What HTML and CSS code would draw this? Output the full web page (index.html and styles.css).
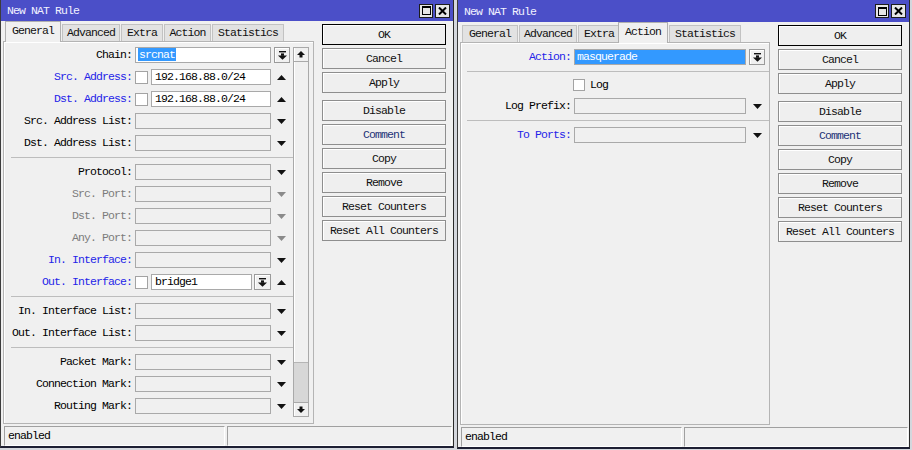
FILE: index.html
```html
<!DOCTYPE html>
<html>
<head>
<meta charset="utf-8">
<title>New NAT Rule</title>
<link rel="stylesheet" href="styles.css">
</head>
<body>
<div class="desk">

  <!-- LEFT WINDOW : General tab -->
  <div class="win win-a">
    <div class="title">
      <span class="title-text">New NAT Rule</span>
      <div class="tbtns">
        <span class="tbtn max"><svg width="9" height="9" viewBox="0 0 9 9"><rect x="0.5" y="0.5" width="8" height="8" fill="none" stroke="#000"/><rect x="0" y="0" width="9" height="2" fill="#000"/></svg></span>
        <span class="tbtn close"><svg width="9" height="8" viewBox="0 0 9 8"><path d="M1 0.5 L8 7.5 M8 0.5 L1 7.5" stroke="#000" stroke-width="2"/></svg></span>
      </div>
    </div>
    <div class="wbody">
      <div class="main">
        <div class="tabbox">
          <div class="tabs">
            <span class="tab active t1">General</span>
            <span class="tab t2">Advanced</span>
            <span class="tab t3">Extra</span>
            <span class="tab t4">Action</span>
            <span class="tab t5">Statistics</span>
          </div>
          <div class="panel panel-a">
            <div class="form form-a">
              <div class="row">
                <span class="lbl">Chain:</span>
                <div class="ctl"><div class="field white"><span class="sel">srcnat</span></div></div>
                <div class="arr"><span class="ddbtn"><svg width="9" height="9" viewBox="0 0 9 9"><rect x="1" y="0" width="7" height="1.4"/><rect x="3" y="2.4" width="3" height="2.4"/><polygon points="0,4.6 9,4.6 4.5,8.8"/></svg></span></div>
              </div>
              <div class="row">
                <span class="lbl blue">Src. Address:</span>
                <div class="ctl"><span class="cb"></span><div class="field white grow">192.168.88.0/24</div></div>
                <div class="arr"><svg class="tri" width="9" height="5" viewBox="0 0 9 5"><polygon points="0,5 9,5 4.5,0"/></svg></div>
              </div>
              <div class="row">
                <span class="lbl blue">Dst. Address:</span>
                <div class="ctl"><span class="cb"></span><div class="field white grow">192.168.88.0/24</div></div>
                <div class="arr"><svg class="tri" width="9" height="5" viewBox="0 0 9 5"><polygon points="0,5 9,5 4.5,0"/></svg></div>
              </div>
              <div class="row">
                <span class="lbl">Src. Address List:</span>
                <div class="ctl"><div class="field"></div></div>
                <div class="arr"><svg class="tri" width="9" height="5" viewBox="0 0 9 5"><polygon points="0,0 9,0 4.5,5"/></svg></div>
              </div>
              <div class="row">
                <span class="lbl">Dst. Address List:</span>
                <div class="ctl"><div class="field"></div></div>
                <div class="arr"><svg class="tri" width="9" height="5" viewBox="0 0 9 5"><polygon points="0,0 9,0 4.5,5"/></svg></div>
              </div>
              <div class="sep sep-a"></div>
              <div class="row">
                <span class="lbl">Protocol:</span>
                <div class="ctl"><div class="field"></div></div>
                <div class="arr"><svg class="tri" width="9" height="5" viewBox="0 0 9 5"><polygon points="0,0 9,0 4.5,5"/></svg></div>
              </div>
              <div class="row">
                <span class="lbl gray">Src. Port:</span>
                <div class="ctl"><div class="field"></div></div>
                <div class="arr"><svg class="tri dim" width="9" height="5" viewBox="0 0 9 5"><polygon points="0,0 9,0 4.5,5"/></svg></div>
              </div>
              <div class="row">
                <span class="lbl gray">Dst. Port:</span>
                <div class="ctl"><div class="field"></div></div>
                <div class="arr"><svg class="tri dim" width="9" height="5" viewBox="0 0 9 5"><polygon points="0,0 9,0 4.5,5"/></svg></div>
              </div>
              <div class="row">
                <span class="lbl gray">Any. Port:</span>
                <div class="ctl"><div class="field"></div></div>
                <div class="arr"><svg class="tri dim" width="9" height="5" viewBox="0 0 9 5"><polygon points="0,0 9,0 4.5,5"/></svg></div>
              </div>
              <div class="row">
                <span class="lbl blue">In. Interface:</span>
                <div class="ctl"><div class="field"></div></div>
                <div class="arr"><svg class="tri" width="9" height="5" viewBox="0 0 9 5"><polygon points="0,0 9,0 4.5,5"/></svg></div>
              </div>
              <div class="row">
                <span class="lbl blue">Out. Interface:</span>
                <div class="ctl"><span class="cb"></span><div class="field white grow">bridge1</div><span class="ddbtn inner"><svg width="9" height="9" viewBox="0 0 9 9"><rect x="1" y="0" width="7" height="1.4"/><rect x="3" y="2.4" width="3" height="2.4"/><polygon points="0,4.6 9,4.6 4.5,8.8"/></svg></span></div>
                <div class="arr"><svg class="tri" width="9" height="5" viewBox="0 0 9 5"><polygon points="0,5 9,5 4.5,0"/></svg></div>
              </div>
              <div class="sep sep-a"></div>
              <div class="row">
                <span class="lbl">In. Interface List:</span>
                <div class="ctl"><div class="field"></div></div>
                <div class="arr"><svg class="tri" width="9" height="5" viewBox="0 0 9 5"><polygon points="0,0 9,0 4.5,5"/></svg></div>
              </div>
              <div class="row">
                <span class="lbl">Out. Interface List:</span>
                <div class="ctl"><div class="field"></div></div>
                <div class="arr"><svg class="tri" width="9" height="5" viewBox="0 0 9 5"><polygon points="0,0 9,0 4.5,5"/></svg></div>
              </div>
              <div class="sep sep-a"></div>
              <div class="row">
                <span class="lbl">Packet Mark:</span>
                <div class="ctl"><div class="field"></div></div>
                <div class="arr"><svg class="tri" width="9" height="5" viewBox="0 0 9 5"><polygon points="0,0 9,0 4.5,5"/></svg></div>
              </div>
              <div class="row">
                <span class="lbl">Connection Mark:</span>
                <div class="ctl"><div class="field"></div></div>
                <div class="arr"><svg class="tri" width="9" height="5" viewBox="0 0 9 5"><polygon points="0,0 9,0 4.5,5"/></svg></div>
              </div>
              <div class="row">
                <span class="lbl">Routing Mark:</span>
                <div class="ctl"><div class="field"></div></div>
                <div class="arr"><svg class="tri" width="9" height="5" viewBox="0 0 9 5"><polygon points="0,0 9,0 4.5,5"/></svg></div>
              </div>
            </div>
            <div class="scroll">
              <span class="sb-btn up"><svg width="8" height="7" viewBox="0 0 8 7"><polygon points="0,4 8,4 4,0"/><rect x="2.5" y="4" width="3" height="2.5"/></svg></span>
              <span class="sb-track"></span>
              <span class="sb-thumb"></span>
              <span class="sb-btn down"><svg width="8" height="7" viewBox="0 0 8 7"><rect x="2.5" y="0.5" width="3" height="2.5"/><polygon points="0,3 8,3 4,7"/></svg></span>
            </div>
          </div>
        </div>
        <div class="btns">
          <span class="btn def">OK</span>
          <span class="btn">Cancel</span>
          <span class="btn grp">Apply</span>
          <span class="btn">Disable</span>
          <span class="btn navy">Comment</span>
          <span class="btn">Copy</span>
          <span class="btn">Remove</span>
          <span class="btn">Reset Counters</span>
          <span class="btn">Reset All Counters</span>
        </div>
      </div>
      <div class="status">
        <span class="sfield s1">enabled</span>
        <span class="sfield s2"></span>
      </div>
    </div>
  </div>

  <!-- RIGHT WINDOW : Action tab -->
  <div class="win win-b">
    <div class="title">
      <span class="title-text">New NAT Rule</span>
      <div class="tbtns">
        <span class="tbtn max"><svg width="9" height="9" viewBox="0 0 9 9"><rect x="0.5" y="0.5" width="8" height="8" fill="none" stroke="#000"/><rect x="0" y="0" width="9" height="2" fill="#000"/></svg></span>
        <span class="tbtn close"><svg width="9" height="8" viewBox="0 0 9 8"><path d="M1 0.5 L8 7.5 M8 0.5 L1 7.5" stroke="#000" stroke-width="2"/></svg></span>
      </div>
    </div>
    <div class="wbody">
      <div class="main">
        <div class="tabbox">
          <div class="tabs">
            <span class="tab t1">General</span>
            <span class="tab t2">Advanced</span>
            <span class="tab t3">Extra</span>
            <span class="tab active t4">Action</span>
            <span class="tab t5">Statistics</span>
          </div>
          <div class="panel panel-b">
            <div class="form form-b">
              <div class="row">
                <span class="lbl blue">Action:</span>
                <div class="ctl"><div class="field selall">masquerade</div></div>
                <div class="arr"><span class="ddbtn"><svg width="9" height="9" viewBox="0 0 9 9"><rect x="1" y="0" width="7" height="1.4"/><rect x="3" y="2.4" width="3" height="2.4"/><polygon points="0,4.6 9,4.6 4.5,8.8"/></svg></span></div>
              </div>
              <div class="sep sep-b"></div>
              <div class="row short">
                <span class="lbl"></span>
                <div class="ctl"><span class="cb cb-log"></span><span class="cbtext">Log</span></div>
                <div class="arr"></div>
              </div>
              <div class="row">
                <span class="lbl">Log Prefix:</span>
                <div class="ctl"><div class="field"></div></div>
                <div class="arr"><svg class="tri" width="9" height="5" viewBox="0 0 9 5"><polygon points="0,0 9,0 4.5,5"/></svg></div>
              </div>
              <div class="sep sep-b"></div>
              <div class="row">
                <span class="lbl blue">To Ports:</span>
                <div class="ctl"><div class="field"></div></div>
                <div class="arr"><svg class="tri" width="9" height="5" viewBox="0 0 9 5"><polygon points="0,0 9,0 4.5,5"/></svg></div>
              </div>
            </div>
          </div>
        </div>
        <div class="btns">
          <span class="btn def">OK</span>
          <span class="btn">Cancel</span>
          <span class="btn grp">Apply</span>
          <span class="btn">Disable</span>
          <span class="btn navy">Comment</span>
          <span class="btn">Copy</span>
          <span class="btn">Remove</span>
          <span class="btn">Reset Counters</span>
          <span class="btn">Reset All Counters</span>
        </div>
      </div>
      <div class="status">
        <span class="sfield s1">enabled</span>
        <span class="sfield s2"></span>
      </div>
    </div>
  </div>

</div>
</body>
</html>
```

FILE: styles.css
```css
* { box-sizing: border-box; }

html, body { margin: 0; padding: 0; }

body {
  width: 912px;
  height: 450px;
  overflow: hidden;
  background: #d4d7dd;
  font-family: "Liberation Mono", "DejaVu Sans Mono", monospace;
  font-size: 11.5px;
  letter-spacing: -0.9px;
  color: #000;
}

.desk {
  display: flex;
  gap: 3px;
  align-items: flex-start;
}

/* ---------- window frame ---------- */
.win {
  width: 454px;
  height: 448px;
  background: #f0f0f0;
  border-left: 1px solid #3c3c3c;
  border-right: 1px solid #2a2a2a;
  border-bottom: 2px solid #1d1f33;
  display: flex;
  flex-direction: column;
}
.win-b { width: 453px; height: 449px; }

.title {
  height: 21px;
  flex: none;
  background: #4b4fc8;
  color: #f2f2ff;
  display: flex;
  align-items: center;
  justify-content: space-between;
  padding: 0 3px 0 6px;
}
.win-b .title { height: 22px; }

.title-text { line-height: 14px; padding-top: 1px; }

.tbtns { display: flex; gap: 2px; }

.tbtn {
  width: 14px;
  height: 14px;
  background: #e6e6e6;
  border: 1px solid #1c1c1c;
  display: flex;
  align-items: center;
  justify-content: center;
}
.tbtn.close { width: 15px; }

.wbody {
  flex: 1;
  display: flex;
  flex-direction: column;
  padding: 0 7px 0 2px;
}

.main {
  display: flex;
  gap: 8px;
}

/* ---------- tabs ---------- */
.tabbox { width: 311px; }
.win-b .tabbox { width: 310px; }

.tabs {
  height: 20px;
  display: flex;
  align-items: flex-end;
  padding-left: 2px;
  gap: 1px;
}

.tab {
  height: 17px;
  background: #e2e2e2;
  border: 1px solid #c2c2c2;
  border-bottom: none;
  text-align: center;
  line-height: 15px;
  color: #111;
}
.tab.active {
  height: 21px;
  margin-bottom: -1px;
  background: #f0f0f0;
  border-color: #b0b0b0;
  line-height: 18px;
  position: relative;
  z-index: 1;
}
.t1 { width: 56px; }
.t2 { width: 58px; }
.t3 { width: 42px; }
.t4 { width: 47px; }
.t5 { width: 72px; }
.tab.active.t4 { width: 50px; margin-left: -3px; }

/* ---------- panel / form ---------- */
.panel {
  height: 383px;
  border: 1px solid #b4b4b4;
  box-shadow: inset 1px 1px 0 #ffffff;
  display: flex;
  align-items: flex-start;
}
.panel-a { padding: 5px 4px 6px 1px; }
.panel-b { padding: 6px 1px 5px 1px; }

.form {
  display: flex;
  flex-direction: column;
  gap: 6px;
}

.row {
  height: 16px;
  display: flex;
  align-items: center;
}
.row.short { height: 14px; }

.lbl {
  flex: none;
  text-align: right;
  white-space: nowrap;
  padding-right: 3px;
  line-height: 14px;
}
.form-a .lbl { width: 130px; }
.form-b .lbl { width: 112px; }

.blue { color: #2424e8; }
.gray { color: #7c7c7c; }

.ctl {
  flex: none;
  display: flex;
  align-items: center;
  height: 16px;
}
.form-a .ctl { width: 136px; }
.form-b .ctl { width: 172px; }

.arr {
  flex: none;
  height: 16px;
  display: flex;
  align-items: center;
  justify-content: center;
}
.form-a .arr { width: 21px; }
.form-b .arr { width: 22px; }

.tri { fill: #111; }
.tri.dim { fill: #8a8a8a; }

.field {
  flex: 1;
  height: 16px;
  border: 1px solid #a9a9a9;
  background: #f0f0f0;
  line-height: 14px;
  padding-left: 2px;
  white-space: nowrap;
  overflow: hidden;
}
.field.white { background: #ffffff; }
.field.grow { padding-left: 3px; }

.sel {
  background: #3399ff;
  color: #fff;
  padding: 0 1px;
  display: inline-block;
  line-height: 13px;
}

.field.selall {
  background: #3399ff;
  color: #fff;
  border-color: #a9a9a9;
  padding-left: 2px;
}

.cb {
  flex: none;
  width: 13px;
  height: 13px;
  border: 1px solid #a3a3a3;
  background: #fff;
  margin-right: 3px;
}
.cb-log { width: 12px; height: 12px; margin-left: -1px; margin-right: 5px; }
.cbtext { line-height: 14px; }

.ddbtn {
  width: 16px;
  height: 16px;
  border: 1px solid #9a9a9a;
  background: #f0f0f0;
  box-shadow: inset 1px 1px 0 #fff;
  display: flex;
  align-items: center;
  justify-content: center;
  fill: #111;
}
.form-a .arr .ddbtn { margin-left: 2px; margin-right: 1px; }
.form-b .arr .ddbtn { margin-left: 3px; margin-right: 3px; }
.ddbtn.inner { width: 17px; margin-left: 2px; }

.sep {
  height: 1px;
  background: #bdbdbd;
}
.sep-a { margin-left: 6px; margin-right: -1px; }
.sep-b { margin-left: 5px; margin-right: -1px; }

/* ---------- scrollbar ---------- */
.scroll {
  align-self: stretch;
  width: 16px;
  margin-left: 1px;
  border: 1px solid #a9a9a9;
  display: flex;
  flex-direction: column;
  background: #f0f0f0;
  box-shadow: inset 1px 0 0 #fff;
}
.sb-btn {
  height: 14px;
  flex: none;
  display: flex;
  align-items: center;
  justify-content: center;
  fill: #111;
  border-bottom: 1px solid #a9a9a9;
}
.sb-btn.down { border-bottom: none; border-top: 1px solid #a9a9a9; }
.sb-track { flex: 1; }
.sb-thumb {
  height: 40px;
  flex: none;
  background: #d7d7d7;
  border-top: 1px solid #b5b5b5;
}

/* ---------- buttons ---------- */
.btns {
  width: 124px;
  flex: none;
  padding-top: 3px;
  display: flex;
  flex-direction: column;
}
.btn {
  height: 21px;
  margin-bottom: 3px;
  border: 1px solid #8e8e8e;
  background: #efefef;
  box-shadow: inset 1px 1px 0 #ffffff;
  text-align: center;
  line-height: 19px;
  color: #111;
  white-space: nowrap;
}
.btn.def { border-color: #000; }
.btn.grp { margin-bottom: 7px; }
.btn.navy { color: #1e3278; }

/* ---------- status bar ---------- */
.status {
  height: 20px;
  margin-top: 2px;
  margin-left: 1px;
  margin-right: -6px;
  display: flex;
  gap: 2px;
}
.sfield {
  height: 20px;
  border-top: 1px solid #a0a0a0;
  border-left: 1px solid #a0a0a0;
  border-right: 1px solid #ffffff;
  border-bottom: 1px solid #ffffff;
  line-height: 18px;
  padding-left: 3px;
}
.s1 { width: 221px; }
.s2 { flex: 1; }
```
